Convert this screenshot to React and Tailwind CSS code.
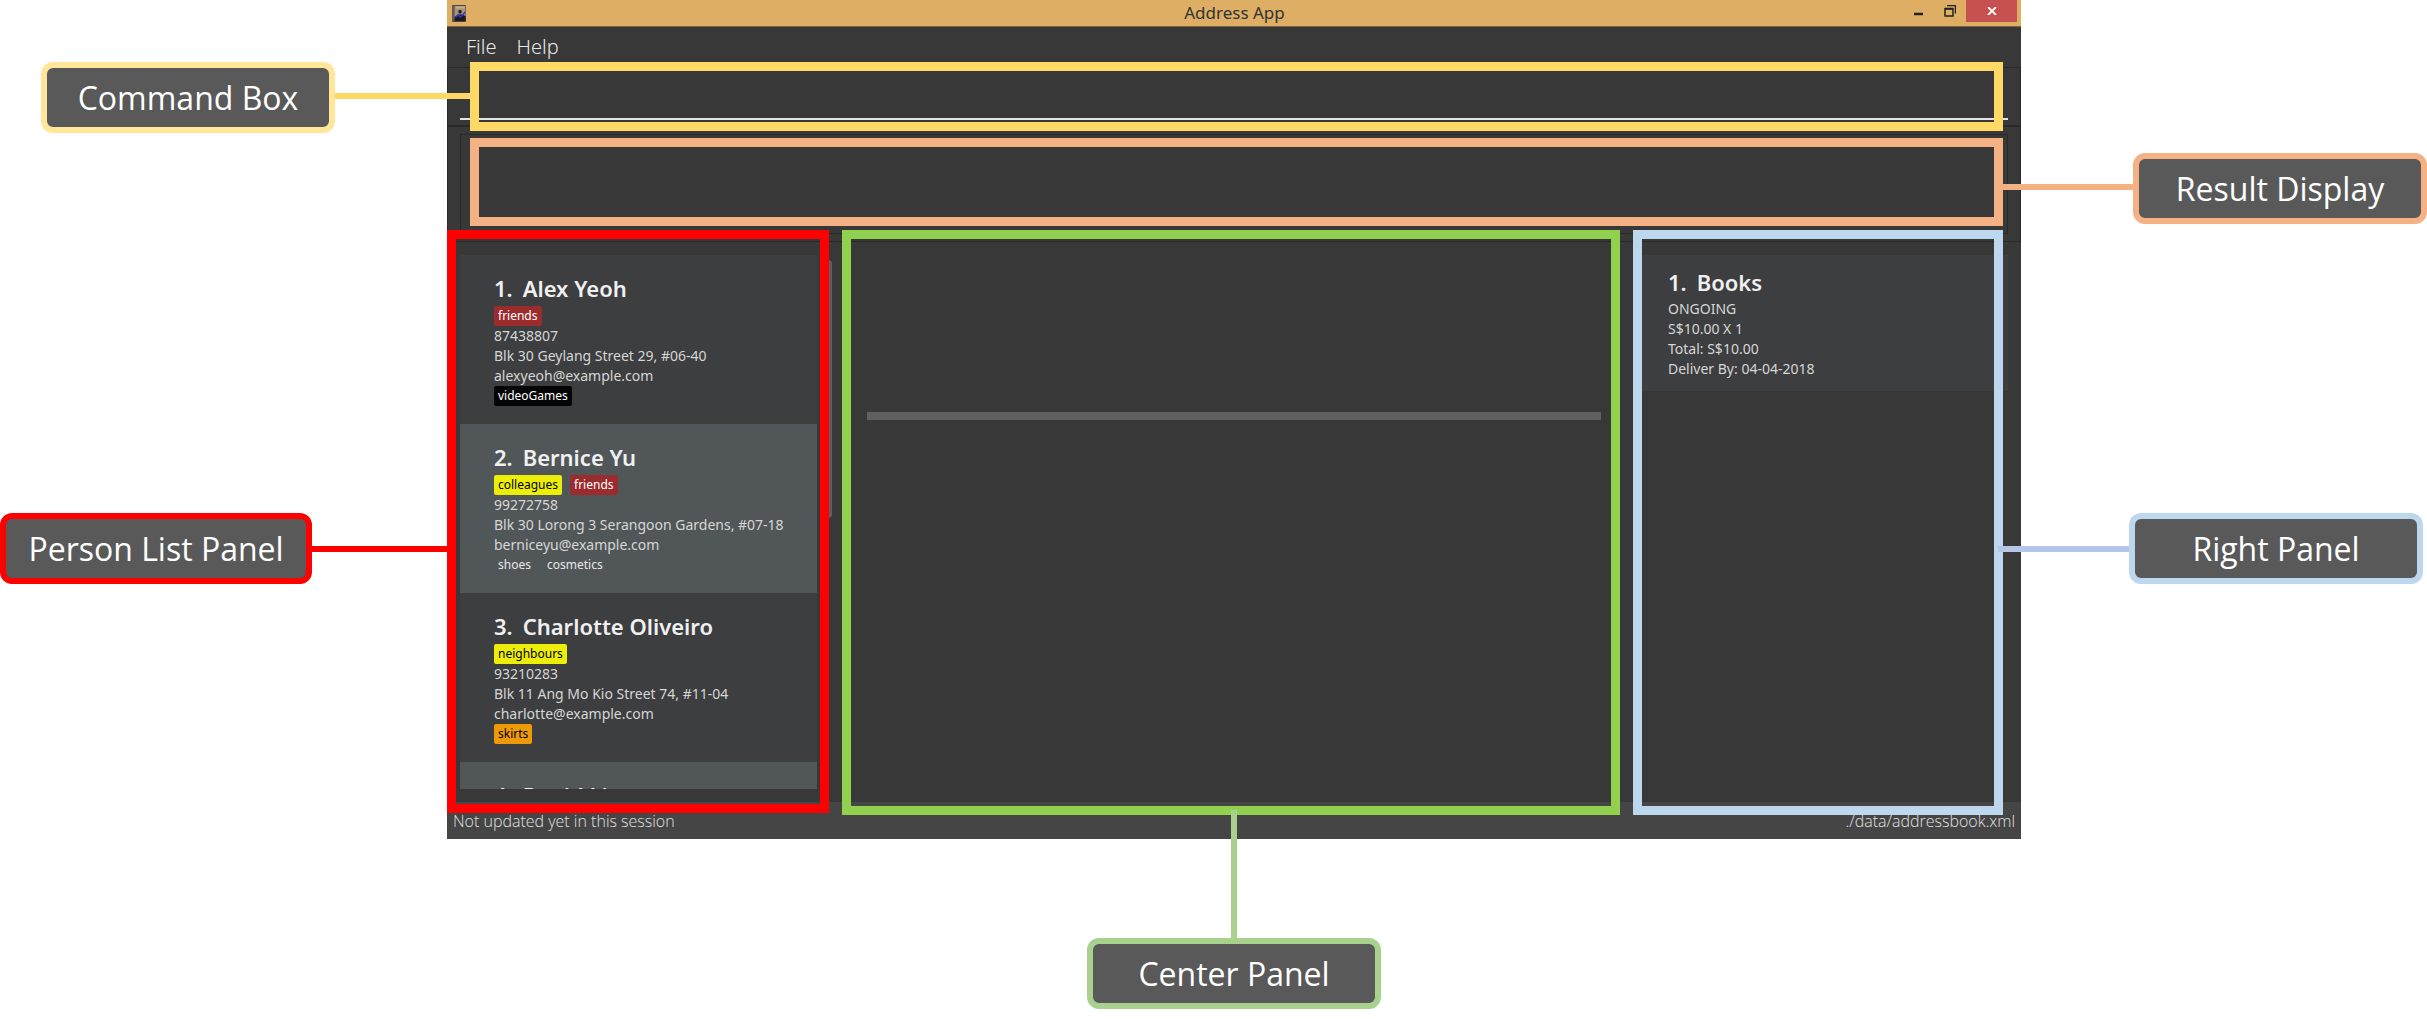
const persons = [
  { name: 'Alex Yeoh', groups: ['friends'], phone: '87438807', address: 'Blk 30 Geylang Street 29, #06-40', email: 'alexyeoh@example.com', prefs: ['videoGames'] },
  { name: 'Bernice Yu', groups: ['colleagues', 'friends'], phone: '99272758', address: 'Blk 30 Lorong 3 Serangoon Gardens, #07-18', email: 'berniceyu@example.com', prefs: ['shoes', 'cosmetics'] },
  { name: 'Charlotte Oliveiro', groups: ['neighbours'], phone: '93210283', address: 'Blk 11 Ang Mo Kio Street 74, #11-04', email: 'charlotte@example.com', prefs: ['skirts'] },
  { name: 'David Li', groups: [], phone: '', address: '', email: '', prefs: [] },
];

const tagColors = {
  friends: 'bg-[#9b2b2d] text-white',
  videoGames: 'bg-[#050505] text-white',
  colleagues: 'bg-[#eded0a] text-black',
  neighbours: 'bg-[#eded0a] text-black',
  skirts: 'bg-[#ee9a06] text-black',
};

function Tag({ name }) {
  return <span className={`rounded-xs px-1 text-[12px] leading-[20px] ${tagColors[name] || 'text-[#e8e8e8]'}`}>{name}</span>;
}

function Tags({ names }) {
  return (
    <div className="flex gap-2">
      {names.map((n) => <Tag key={n} name={n} />)}
    </div>
  );
}

function PersonCard({ person, index }) {
  return (
    <li className={`h-[169px] shrink-0 whitespace-nowrap pt-[18px] pl-[34px] ${index % 2 ? 'bg-[#515658]' : 'bg-[#3c3e3f]'}`}>
      <h2 className="text-[22px] font-semibold leading-[30px] text-[#f0f0f0]">
        <span className="mr-2.5">{index + 1}.</span>{person.name}
      </h2>
      <div className="pt-[3px]">
        <Tags names={person.groups} />
        <p>{person.phone}</p>
        <p>{person.address}</p>
        <p>{person.email}</p>
        <Tags names={person.prefs} />
      </div>
    </li>
  );
}

function Callout({ children, className }) {
  return (
    <div className={`flex h-[71px] shrink-0 items-center justify-center whitespace-nowrap rounded-xl border-[6px] bg-[#595959] text-[32px] text-white ${className}`}>
      {children}
    </div>
  );
}

function AppIcon() {
  return (
    <svg viewBox="0 0 14 17" className="h-[17px] w-3.5" aria-hidden="true">
      <rect width="14" height="17" rx="1" fill="#4b4442" />
      <rect x="2.5" y="1" width="11" height="11" fill="#a8937a" />
      <rect x="3.5" y="1.5" width="9" height="2" fill="#c4ab88" />
      <rect x="6.5" y="5" width="3" height="3.5" rx="1" fill="#1d1a1a" />
      <path d="M3 16v-4.500l3-2h4l3.500 1.500v5z" fill="#1d1a1a" />
      <path d="M3.500 12.500l2.500-2.500 2 2 2-1 3-4" fill="none" stroke="#2f35e0" strokeWidth="1.4" />
      <path d="M1 1v15" stroke="#77706c" />
    </svg>
  );
}

export default function App() {
  return (
    <div className="flex h-screen min-h-[900px] flex-col overflow-hidden bg-white font-['Open_Sans',sans-serif]">
      <div className="grid min-h-0 flex-1 grid-cols-[447fr_1574fr_406fr]">
        <aside className="z-10 flex flex-col pt-[62px]">
          <div className="-mr-6 flex items-center pl-[41px]">
            <Callout className="w-[294px] border-[#ffe699]">Command Box</Callout>
            <div className="mb-1 h-1.5 flex-1 bg-[#ffd966]" />
          </div>
          <div className="mt-[380px] flex items-center">
            <Callout className="w-[312px] border-[#ff0000]">Person List Panel</Callout>
            <div className="h-1.5 flex-1 bg-[#ff0000]" />
          </div>
        </aside>

        <div className="flex min-h-0 flex-col bg-[#383838] font-['Noto_Sans',sans-serif]">
          <header className="flex h-[27px] shrink-0 items-start border-b border-[#806540] bg-[#deae65]">
            <div className="flex-1 pt-[5px] pl-[5px]"><AppIcon /></div>
            <h1 className="text-[17px] leading-[26px] text-[#333]">Address App</h1>
            <div className="flex flex-1 justify-end pr-1">
              <button aria-label="Minimize" className="flex h-[22px] w-8 items-center justify-center">
                <svg viewBox="0 0 11 12" className="h-3 w-[11px]"><path d="M1 9h9" stroke="#222" strokeWidth="2.5" /></svg>
              </button>
              <button aria-label="Restore" className="flex h-[22px] w-8 items-center justify-center">
                <svg viewBox="0 0 12 12" className="h-3 w-3" fill="none" stroke="#222"><path d="M1 3.500h8v7.500h-8z" strokeWidth="1.5" /><path d="M1 4h8M3 .5h8.500v8" strokeWidth="1.5" /></svg>
              </button>
              <button aria-label="Close" className="flex h-[22px] w-[51px] items-center justify-center bg-[#c75050]">
                <svg viewBox="0 0 10 8" className="h-2 w-2.5"><path d="M1 0l8 8M9 0l-8 8" stroke="#fff" strokeWidth="1.8" /></svg>
              </button>
            </div>
          </header>

          <nav className="flex h-10 shrink-0 items-center gap-5 pl-[19px] text-[20px] font-light text-[#e8e8e8]">
            <button>File</button>
            <button>Help</button>
          </nav>

          <section className="relative z-[1] h-[59px] shrink-0 border border-[#2a2a2a] px-3">
            <input aria-label="Command" className="h-[52px] w-full border-b-2 border-[#e4e4e4] bg-transparent px-5 text-[20px] text-white outline-none" />
            <div className="pointer-events-none absolute -top-1.5 -bottom-1.5 left-[22px] right-[17px] border-[9px] border-[#ffd966]" />
          </section>

          <section className="relative h-[116px] shrink-0 border border-[#2a2a2a] px-3 py-[7px]">
            <output aria-label="Result" className="block h-full border border-[#2a2a2a]" />
            <div className="pointer-events-none absolute top-[11px] bottom-[15px] left-[22px] right-[17px] border-[9px] border-[#f4b183]" />
          </section>

          <main className="grid min-h-0 flex-1 grid-cols-[382fr_778fr_370fr] grid-rows-1 gap-[13px] pr-[18px] text-[14px] leading-[20px] text-[#d6d6d6]">
            <section aria-label="Persons" className="relative flex min-h-0 flex-col py-[13px] pr-3 pl-[13px]">
              <ul className="flex min-h-0 flex-1 flex-col overflow-hidden">
                {persons.map((p, i) => <PersonCard key={p.name} person={p} index={i} />)}
              </ul>
              <div className="absolute -right-[3px] top-[18px] h-[258px] w-2 rounded bg-[#5c6062]" />
              <div className="pointer-events-none absolute inset-x-0 -top-3 -bottom-[11px] border-[9px] border-[#ff0000]" />
            </section>
            <section aria-label="Details" className="relative pr-[19px] pl-[25px] pt-[170px]">
              <div className="h-2 bg-[#606060]" />
              <div className="pointer-events-none absolute inset-x-0 -top-3 -bottom-[13px] border-[9px] border-[#92d050]" />
            </section>
            <section aria-label="Orders" className="relative pt-[13px]">
              <ul className="-mr-[5px] ml-[9px]">
                <li className="h-[136px] bg-[#3c3e3f] pt-3 pl-[26px]">
                  <h2 className="mb-0.5 text-[22px] font-semibold leading-[30px] text-[#f0f0f0]"><span className="mr-2.5">1.</span>Books</h2>
                  <p>ONGOING</p>
                  <p>S$10.00 X 1</p>
                  <p>Total: S$10.00</p>
                  <p>Deliver By: 04-04-2018</p>
                </li>
              </ul>
              <div className="pointer-events-none absolute inset-x-0 -top-3 -bottom-[13px] border-[9px] border-[#bdd7ee]" />
            </section>
          </main>

          <footer className="flex h-[37px] shrink-0 items-center justify-between bg-[#454545] px-1.5 font-['Open_Sans',sans-serif] text-[16px] font-light text-[#e0e0e0]">
            <span>Not updated yet in this session</span>
            <span>./data/addressbook.xml</span>
          </footer>
        </div>

        <aside className="z-10 flex flex-col pt-[153px]">
          <div className="-ml-[18px] flex items-center">
            <div className="mb-1 h-1.5 flex-1 bg-[#f4b183]" />
            <Callout className="w-[294px] border-[#f4b183]">Result Display</Callout>
          </div>
          <div className="mt-[289px] -ml-[23px] flex items-center pr-1">
            <div className="h-1.5 flex-1 bg-[#b4c7e7]" />
            <Callout className="w-[294px] border-[#bdd7ee]">Right Panel</Callout>
          </div>
        </aside>
      </div>

      <div className="z-10 -mt-[29px] grid shrink-0 grid-cols-[447fr_1574fr_406fr] pb-2.5">
        <div className="col-start-2 flex flex-col items-center">
          <div className="h-32 w-1.5 bg-[#a9d18e]" />
          <Callout className="w-[294px] border-[#a9d18e]">Center Panel</Callout>
        </div>
      </div>
    </div>
  );
}
